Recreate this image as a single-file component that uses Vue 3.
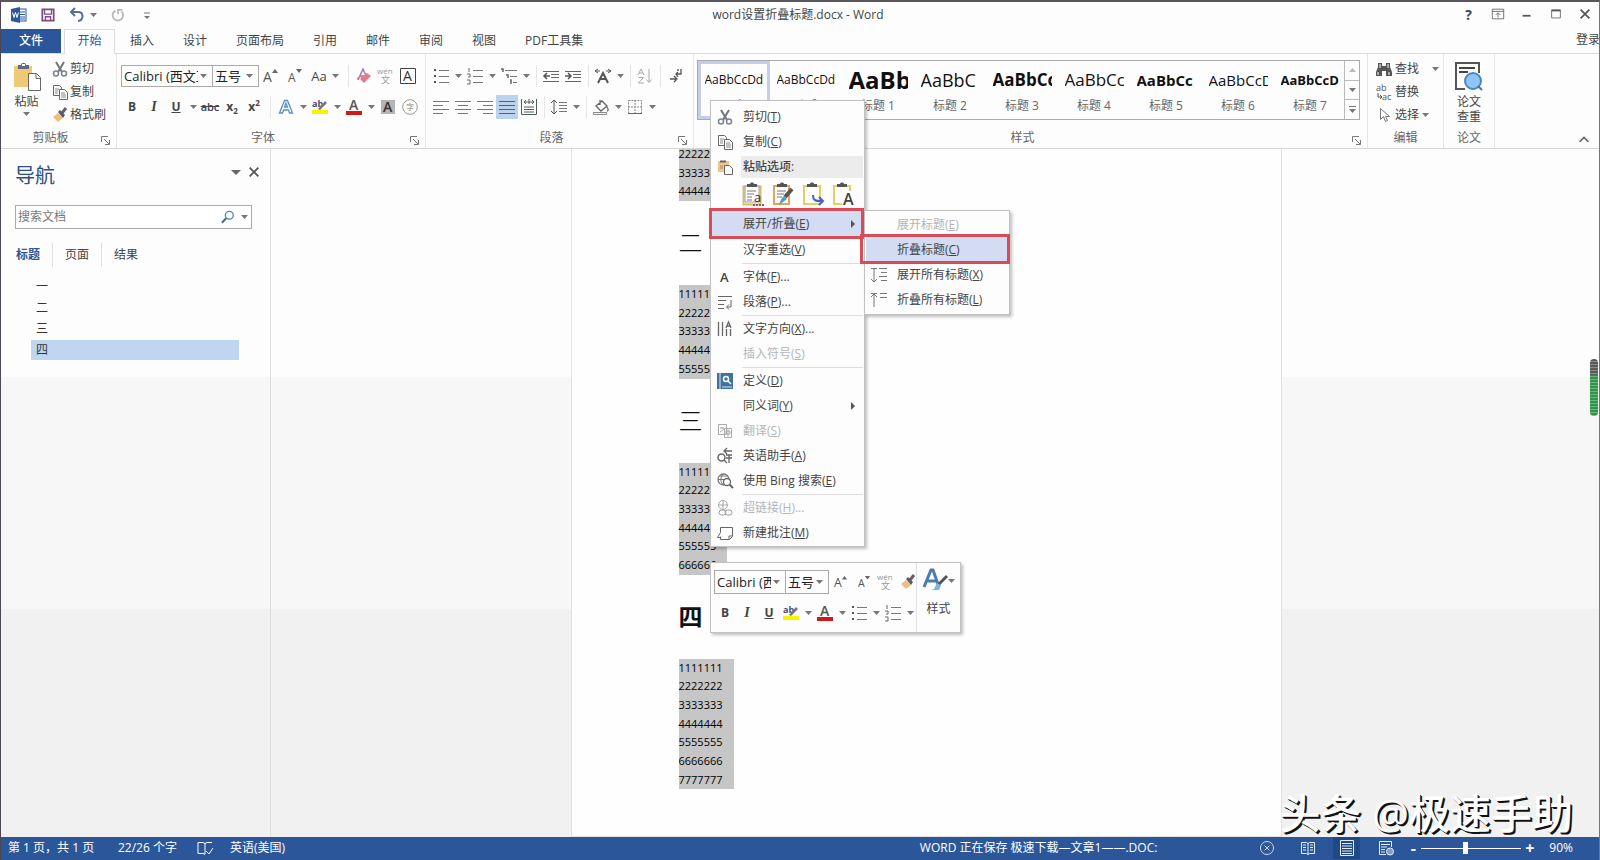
<script setup>
import { h, ref } from 'vue'

const art = {
  word: '<rect x="7" y="2" width="8" height="12" fill="#fff" stroke="#2b579a"/><path d="M9 5h5M9 7.500h5M9 10h5M9 12h5" stroke="#2b579a"/><path d="M0 2l9-2v16l-9-2z" fill="#2b579a"/><path d="M1.500 5.500l1.500 5 1.500-5 1.500 5 1.500-5" fill="none" stroke="#fff"/>',
  save: '<path d="M1.500 1.500h13v13h-13z" fill="#fff" stroke="#7c4a86" stroke-width="2"/><path d="M4 2v5h8V2M5 14v-4h6v4" fill="none" stroke="#7c4a86" stroke-width="1.500"/>',
  undo: '<path d="M6 1L2 5l4 4M2 5h7c6 0 6 8 0 9" fill="none" stroke="#5a6f94" stroke-width="2"/>',
  redo: '<path d="M5 3a6 6 0 1 0 7 1M8 1v6M8 2h5" fill="none" stroke="#b9b9b9" stroke-width="2"/>',
  custom: '<path d="M5 6h6" stroke="#777"/><path d="M5 9h6l-3 3z" fill="#777"/>',
  ribbon: '<path d="M1.500 2.500h13v11h-13zM1.500 5h13M8 12V7M5.500 9L8 6.500 10.500 9" fill="none" stroke="#666"/>',
  min: '<path d="M3 10h9" stroke="#555" stroke-width="2"/>',
  max: '<path d="M3 3.500h10v9H3z" fill="none" stroke="#666"/><path d="M3 4h10" stroke="#555" stroke-width="2"/>',
  close: '<path d="M3 3l10 10M13 3L3 13" stroke="#555" stroke-width="2"/>',
  paste: '<path d="M2 4h18v21H2z" fill="#efc878"/><path d="M6 3h3c0-3 5-3 5 0h3v4H6z" fill="#626a7c"/><rect x="10" y="2" width="3" height="2" fill="#fff"/><path d="M16.500 11.500h8l4 4v13h-12z" fill="#fff" stroke="#666"/><path d="M24 11.500v5h5" fill="none" stroke="#666"/>',
  cut: '<path d="M4 1l6 10M12 1L6 11" stroke="#6f767d" stroke-width="2"/><circle cx="4" cy="12.500" r="2.500" fill="none" stroke="#7a858f" stroke-width="1.500"/><circle cx="12" cy="12.500" r="2.500" fill="none" stroke="#7a858f" stroke-width="1.500"/>',
  copy: '<path d="M1.500 1.500h6l2 2v8h-8z" fill="#fff" stroke="#666"/><path d="M3 5h4M3 7h3M3 9h3" stroke="#888"/><path d="M7.500 5.500h5l3 3v7h-8z" fill="#fff" stroke="#666"/><path d="M9 9h4M9 11h5M9 13h5" stroke="#888"/>',
  brush: '<path d="M1 10l5-4 5 5-5 4z" fill="#efbd7d"/><path d="M6 5l2-2 5 5-2 3z" fill="#555b6b"/><path d="M10 6l4-5" stroke="#6c5a64" stroke-width="3"/>',
  eraser: '<path d="M2 12L7 1l4 9M4 8h5" fill="none" stroke="#9b7ba8" stroke-width="1.500"/><path d="M4 11l7-6 4 3-7 7z" fill="#e4788f"/><path d="M1 11l4-3 2 4" fill="none" stroke="#e4788f" stroke-width="1.500"/>',
  growA: '<text x="0" y="14" font-size="14" fill="#555">A</text><path d="M9 5h6l-3-4z" fill="#666"/>',
  shrinkA: '<text x="1" y="14" font-size="12" fill="#555">A</text><path d="M9 1h6l-3 4z" fill="#666"/>',
  wen: '<text x="-1" y="6" font-size="8" fill="#999">wén</text><text x="3" y="15" font-size="9" fill="#999">文</text>',
  boxA: '<path d="M.5.5h15v15H.5z" fill="#fff" stroke="#444"/><text x="3" y="13" font-size="14" fill="#333">A</text>',
  outA: '<path d="M1.500 14L6.500 1.500h3L14.500 14h-3l-1-3h-5l-1 3zM6.500 8h3L8 4z" fill="#fff" stroke="#5b8fc4" stroke-width="1.300"/>',
  mark: '<text x="0" y="8" font-size="9" font-weight="700" fill="#4a4a78">ab</text><path d="M6 10l7-8 2 2-7 7z" fill="#777"/><path d="M0 11h16v4H0z" fill="#f5f500"/>',
  redA: '<text x="3" y="11" font-size="14" fill="#555" font-weight="600">A</text><path d="M0 12h16v4H0z" fill="#cf1b16"/>',
  greyA: '<path d="M1 1h14v14H1z" fill="#b5b5b5"/><text x="3" y="13" font-size="14" fill="#333" font-weight="600">A</text>',
  ring: '<circle cx="8" cy="8" r="7.300" fill="#fff" stroke="#999"/><text x="4" y="11" font-size="8" fill="#888">字</text>',
  bullets: '<path d="M1 2h2M1 8h2M1 14h2" stroke="#555" stroke-width="2"/><path d="M6 2.500h10M6 8.500h10M6 14.500h10" stroke="#777"/>',
  numbers: '<path d="M2 0v4M0 6h3v3H1M0 12h3v4H0" fill="none" stroke="#666"/><path d="M6 2.500h10M6 8.500h10M6 14.500h10" stroke="#777"/>',
  multi: '<path d="M0 1h2v3M5 7h2v3M9 12h1v4" fill="none" stroke="#666" stroke-width="1.500"/><path d="M4 2.500h12M9 8.500h7M12 14.500h4" stroke="#777"/>',
  outdent: '<path d="M0 3.500h16M8 6.500h8M8 9.500h8M0 13.500h16" stroke="#666"/><path d="M7 8H1M4 5L1 8l3 3" fill="none" stroke="#555" stroke-width="1.500"/>',
  indent: '<path d="M0 3.500h16M8 6.500h8M8 9.500h8M0 13.500h16" stroke="#666"/><path d="M0 8h6M3 5l3 3-3 3" fill="none" stroke="#555" stroke-width="1.500"/>',
  scaleA: '<path d="M3 15L8 5l5 10M5 11h6" fill="none" stroke="#555" stroke-width="2"/><path d="M5 3H0M3 1L0 3l3 2M11 3h5M13 1l3 2-3 2" fill="none" stroke="#555"/>',
  sort: '<path d="M1 7l3-6 3 6M2 5h4M1.500 9.500h5l-5 5.500h5.500M12 1v13M9.500 11.500L12 14.500l2.500-3" fill="none" stroke="#aaa"/>',
  wrap: '<path d="M14 1v5H9M11 4L9 6l2 3M3 11h6M7 8l3 3-3 3M11 1v2" fill="none" stroke="#555" stroke-width="1.300"/>',
  left: '<path d="M0 2.500h16M0 6.500h10M0 10.500h16M0 14.500h10" stroke="#777"/>',
  center: '<path d="M0 2.500h16M3 6.500h10M0 10.500h16M3 14.500h10" stroke="#777"/>',
  right: '<path d="M0 2.500h16M6 6.500h10M0 10.500h16M6 14.500h10" stroke="#777"/>',
  justify: '<path d="M0 2.500h16M0 6.500h16M0 10.500h16M0 14.500h16" stroke="#4a6384"/>',
  distribute: '<path d="M.5 0v15.500h15V0M3 8h10M3 10.500h10M3 13h10M3 3h10M5 1L3 3l2 2M11 1l2 2-2 2M8 0v5" fill="none" stroke="#4f5f58"/>',
  spacing: '<path d="M3 1v14M0 4l3-3 3 3M0 12l3 3 3-3" fill="none" stroke="#555"/><path d="M8 3.500h8M8 6.500h8M8 9.500h8M8 12.500h8" stroke="#777"/>',
  bucket: '<path d="M3 7l6-5 5 5-6 5zM7 1v5M14 8c2 3 1 4 0 4" fill="none" stroke="#666" stroke-width="1.300"/><path d="M.5 13.500h13v2H.5z" fill="#fff" stroke="#888"/>',
  borders: '<path d="M1.500 1.500h13v13h-13zM8 1v14M1 8h14" fill="none" stroke="#888" stroke-dasharray="2 1"/><path d="M1 14.500h14" stroke="#666"/>',
  find: '<path d="M2 2h4v3h4V2h4v4l2 5v4h-6v-5H6v5H0v-4l2-5z" fill="#555"/><path d="M2 11v3M13 11v3M4 3v4M12 3v4" stroke="#fff"/>',
  replace: '<text x="0" y="7" font-size="9" fill="#555">ab</text><text x="6" y="16" font-size="9" fill="#555">ac</text><path d="M2 9v4h3M4 11l2 2-2 2" fill="none" stroke="#555"/>',
  pointer: '<path d="M4.500 1.500v11l3-3 2 5 2-1-2-4h4z" fill="#fff" stroke="#777"/>',
  paper: '<path d="M11 28H2V2h23v10" fill="none" stroke="#555" stroke-width="2"/><path d="M5 7h16M5 11h9" stroke="#444" stroke-width="2"/><circle cx="19" cy="20" r="8" fill="#8fc5f5" stroke="#4d86bd" stroke-width="2"/><path d="M24 25l4 4" stroke="#4d6f92" stroke-width="2"/>',
  up: '<path d="M3 10l5-5 5 5" fill="none" stroke="#666" stroke-width="2"/>',
  search: '<circle cx="9.500" cy="6" r="4.500" fill="#fff" stroke="#4d88a5" stroke-width="1.500"/><path d="M6 9.500L1 14.500" stroke="#4d7088" stroke-width="2.500"/>',
  launch: '<path d="M1.500 7V1.500H8M4 4l5 5M9.500 5v4.500H5" fill="none" stroke="#777"/>',
  pasteSm: '<path d="M1 2h11v11H1z" fill="#f0c58c"/><path d="M3 1.500h6v2H3z" fill="#666"/><path d="M7.500 6.500h5l3 3v6h-8z" fill="#fff" stroke="#666"/><path d="M3 7h3M3 9h3" stroke="#a87"/>',
  fontA: '<text x="3" y="13" font-size="13" font-weight="600" fill="#444">A</text>',
  para: '<path d="M1 2.500h14M1 6.500h8M1 10.500h6M1 14.500h6M14 6v7h-4M12 10.500L9.500 13l2.500 2.500" fill="none" stroke="#666"/>',
  direction: '<path d="M1.500 1v14M5.500 1v14M9.500 8v7M13.500 8v7M9 7l2.500-6L14 7M10 5h3.500" fill="none" stroke="#666" stroke-width="1.300"/>',
  define: '<path d="M0 0h16v16H0z" fill="#41719f"/><path d="M3 0v16M5 14h10" stroke="#dce8f2"/><circle cx="9" cy="6" r="2.500" fill="none" stroke="#fff" stroke-width="1.500"/><path d="M11 8l3 3" stroke="#fff" stroke-width="1.500"/>',
  translate: '<path d="M1.500 1.500h8v10h-8zM3 5h4M5 4v2M3 9l4-3M7.500 5.500h7v9h-7zM9 8h4v3H9zM11 6.500v7" fill="none" stroke="#aaa"/>',
  english: '<circle cx="4.500" cy="9.500" r="3.500" fill="none" stroke="#666" stroke-width="1.500"/><path d="M7 12l3 3M7 3h8M10 0L7 3l3 3M9 7h6M9 10h6M12 7v8" fill="none" stroke="#666" stroke-width="1.300"/>',
  bing: '<circle cx="6.500" cy="6.500" r="5.500" fill="none" stroke="#777" stroke-width="1.300"/><path d="M1 6.500h6M6.500 1c-4 3-3 9 0 11M3 3h8" fill="none" stroke="#777"/><circle cx="10" cy="9" r="3.500" fill="#fff" stroke="#666" stroke-width="1.300"/><path d="M12.500 11.500L16 15" stroke="#666" stroke-width="2"/>',
  link: '<circle cx="6" cy="5" r="4.500" fill="none" stroke="#aaa"/><path d="M1.500 5h9M6 .5v9" stroke="#aaa"/><rect x="2" y="10" width="7" height="5" rx="2.500" fill="#fff" stroke="#999"/><rect x="8" y="10" width="7" height="5" rx="2.500" fill="none" stroke="#999"/>',
  note: '<path d="M3.500 2.500h12v9l-3 3h-9v-3M15 11h-3v3M3.500 2.500v5l-3 5h3" fill="none" stroke="#666"/>',
  expandAll: '<path d="M3 1v14M0 12l3 3 3-3M0 1.500h6M8 1.500h8M10 5.500h6M8 9.500h8M10 13.500h6" fill="none" stroke="#777"/>',
  collapseAll: '<path d="M3 15V2M0 5l3-3 3 3M0 1.500h6M9 1.500h7M9 5.500h7" fill="none" stroke="#777"/>',
  clipText: '<path d="M1.500 3.500h17v18h-17z" fill="#fff" stroke="#e2b968" stroke-width="2"/><path d="M3 3h14v16H3z" fill="#fff" stroke="#999"/><path d="M5 1h3c0-2 4-2 4 0h3v3H5z" fill="#555"/><path d="M5 8h9M5 11h7M5 14h5M5 17h5" stroke="#777"/><text x="12" y="19" font-size="13" fill="#333">a</text><path d="M11 22h11" stroke="#a55" stroke-width="2" stroke-dasharray="2 1"/>',
  clipBrush: '<path d="M2 3h15v18H2z" fill="#fff" stroke="#e3a35c" stroke-width="2"/><path d="M5 1h3c0-2 4-2 4 0h3v3H5z" fill="#555"/><path d="M5 8h9M5 11h7M5 14h5" stroke="#777"/><path d="M20 6l-7 8" stroke="#555" stroke-width="4"/><path d="M12 13l3 3-8 6c1-3 2-7 5-9z" fill="#4f9bc1"/>',
  clipArrow: '<path d="M2 3h16v18H2z" fill="#fff" stroke="#edc968" stroke-width="2"/><path d="M5 1h3c0-2 4-2 4 0h3v3H5z" fill="#555"/><path d="M11 12c0 6 3 6 9 6M17 14l4 4-4 4" fill="none" stroke="#4468b8" stroke-width="2"/>',
  clipA: '<path d="M2 3h16v18H2z" fill="#fff" stroke="#edc968" stroke-width="2"/><path d="M5 1h3c0-2 4-2 4 0h3v3H5z" fill="#555"/><path d="M10 8h14v15H10z" fill="#fff"/><text x="11" y="22" font-size="16" font-weight="600" fill="#444">A</text>',
  bigA: '<path d="M2 19L9 2h2l6 17M5 13h9" fill="none" stroke="#4b7bb0" stroke-width="3"/><path d="M12 21l3-6 4 2-2 5H9z" fill="#77b6df"/><path d="M17 16l8-8" stroke="#555" stroke-width="3"/>',
  spell: '<path d="M8 3v11M1 2.500h5l2 1 2-1h5M1 2.500v11h5l2 1M9 11l3 3 4-6" fill="none" stroke="#fff"/>',
  sync: '<circle cx="8" cy="8" r="6.500" fill="none" stroke="#cddaf0"/><path d="M5.500 5.500l5 5M10.500 5.500l-5 5" stroke="#cddaf0"/>',
  read: '<path d="M8 3v12M1.500 2.500h5l1.500 1 1.500-1h5v11h-5l-1.500 1-1.500-1h-5zM3 5h3M3 7.500h3M3 10h3M10 5h3M10 7.500h3M10 10h3" fill="none" stroke="#e4ecf8"/>',
  print: '<path d="M1.500.5h13v15h-13zM3 3.500h10M3 6h10M3 8.500h10M3 11h10M3 13.500h10" fill="none" stroke="#e4ecf8"/>',
  web: '<path d="M8 14.500H1.500V1.500h12V7M3 4.500h9M3 7h6M3 9.500h4M3 12h4" fill="none" stroke="#e4ecf8"/><circle cx="12" cy="11.500" r="3.500" fill="#7d9ccb" stroke="#e4ecf8"/>'
}

const Icon = ({ name, size = 16, box = 16 }) =>
  h('svg', { width: size, height: size, viewBox: `0 0 ${box} ${box}`, 'aria-hidden': 'true', innerHTML: art[name] })
Icon.props = ['name', 'size', 'box']

const Caret = () =>
  h('svg', { width: 7, height: 4, viewBox: '0 0 7 4', 'aria-hidden': 'true' }, [h('path', { d: 'M0 0h7L3.500 4z', fill: '#777' })])

const tabs = ['插入', '设计', '页面布局', '引用', '邮件', '审阅', '视图', 'PDF工具集']
const windowTools = ['ribbon', 'min', 'max', 'close']

// kinds: i = icon, t = styled letter, d = drop-down caret, s = separator
const fontRow = [
  { k: 't', c: 'b', x: 'B' }, { k: 't', c: 'it', x: 'I' }, { k: 't', c: 'u', x: 'U' }, { k: 'd' },
  { k: 't', c: 'st', x: 'abc' }, { k: 't', c: 'b', x: 'x', sub: '2' }, { k: 't', c: 'b', x: 'x', sup: '2' }, { k: 's' },
  { k: 'i', x: 'outA' }, { k: 'd' }, { k: 'i', x: 'mark' }, { k: 'd' }, { k: 'i', x: 'redA' }, { k: 'd' },
  { k: 'i', x: 'greyA' }, { k: 'i', x: 'ring' }
]
const paraRows = [
  [{ k: 'i', x: 'bullets' }, { k: 'd' }, { k: 'i', x: 'numbers' }, { k: 'd' }, { k: 'i', x: 'multi' }, { k: 'd' }, { k: 's' },
    { k: 'i', x: 'outdent' }, { k: 'i', x: 'indent' }, { k: 's' }, { k: 'i', x: 'scaleA' }, { k: 'd' }, { k: 's' },
    { k: 'i', x: 'sort' }, { k: 's' }, { k: 'i', x: 'wrap' }],
  [{ k: 'i', x: 'left' }, { k: 'i', x: 'center' }, { k: 'i', x: 'right' }, { k: 'i', x: 'justify', on: true },
    { k: 'i', x: 'distribute' }, { k: 's' }, { k: 'i', x: 'spacing' }, { k: 'd' }, { k: 's' },
    { k: 'i', x: 'bucket' }, { k: 'd' }, { k: 'i', x: 'borders' }, { k: 'd' }]
]
const miniRow = [
  { k: 't', c: 'b', x: 'B' }, { k: 't', c: 'it', x: 'I' }, { k: 't', c: 'u', x: 'U' }, { k: 'i', x: 'mark' }, { k: 'd' },
  { k: 'i', x: 'redA' }, { k: 'd' }, { k: 'i', x: 'bullets' }, { k: 'd' }, { k: 'i', x: 'numbers' }, { k: 'd' }
]

const Tools = ({ items }) =>
  items.map((t) => {
    if (t.k === 's') return h('span', { class: 'sep' })
    if (t.k === 'd') return h('button', { class: 'drop', 'aria-label': '更多' }, [h(Caret)])
    if (t.k === 'i') return h('button', { class: ['tool', { on: t.on }], 'aria-label': t.x }, [h(Icon, { name: t.x })])
    return h('button', { class: ['tool', t.c] }, [t.x, t.sub && h('sub', t.sub), t.sup && h('sup', t.sup)])
  })
Tools.props = ['items']

const styles = [
  { n: '正文', p: 'AaBbCcDd', c: 's12', on: true },
  { n: '无间隔', p: 'AaBbCcDd', c: 's12' },
  { n: '标题 1', p: 'AaBb', c: 's24 bold' },
  { n: '标题 2', p: 'AaBbC', c: 's18' },
  { n: '标题 3', p: 'AaBbCc', c: 's17 bold' },
  { n: '标题 4', p: 'AaBbCc', c: 's17' },
  { n: '标题 5', p: 'AaBbCc', c: 's15 bold' },
  { n: '标题 6', p: 'AaBbCcD', c: 's15' },
  { n: '标题 7', p: 'AaBbCcD', c: 's13 bold' }
]

const outline = ['一', '二', '三', '四']
const rows = (from, to, len) => {
  const out = []
  for (let n = from; n <= to; n++) out.push(String(n).repeat(len))
  return out
}
const sections = [
  { lines: rows(2, 4, 5) },
  { title: '二', lines: rows(1, 5, 5) },
  { title: '三', lines: rows(1, 6, 6) },
  { title: '四', lines: rows(1, 7, 7), bold: true }
]

const pasteKinds = ['clipText', 'clipBrush', 'clipArrow', 'clipA']
const menu = [
  { i: 'cut', t: '剪切', k: 'T' },
  { i: 'copy', t: '复制', k: 'C' },
  { i: 'pasteSm', t: '粘贴选项:', title: true },
  { paste: true },
  { t: '展开/折叠', k: 'E', sub: true, on: true },
  { t: '汉字重选', k: 'V' },
  { line: true },
  { i: 'fontA', t: '字体', k: 'F', e: '...' },
  { i: 'para', t: '段落', k: 'P', e: '...' },
  { line: true },
  { i: 'direction', t: '文字方向', k: 'X', e: '...' },
  { t: '插入符号', k: 'S', off: true },
  { line: true },
  { i: 'define', t: '定义', k: 'D' },
  { t: '同义词', k: 'Y', sub: true },
  { i: 'translate', t: '翻译', k: 'S', off: true },
  { i: 'english', t: '英语助手', k: 'A' },
  { i: 'bing', t: '使用 Bing 搜索', k: 'E' },
  { line: true },
  { i: 'link', t: '超链接', k: 'H', e: '...', off: true },
  { i: 'note', t: '新建批注', k: 'M' }
]
const submenu = [
  { t: '展开标题', k: 'E', off: true },
  { t: '折叠标题', k: 'C', on: true },
  { i: 'expandAll', t: '展开所有标题', k: 'X' },
  { i: 'collapseAll', t: '折叠所有标题', k: 'L' }
]
const zoom = ref(44)
</script>

<template>
  <div class="app">
    <header class="titlebar">
      <div class="quick">
        <Icon name="word" />
        <button aria-label="保存"><Icon name="save" :size="14" /></button>
        <button class="undo" aria-label="撤消"><Icon name="undo" /><Caret /></button>
        <button aria-label="重复"><Icon name="redo" :size="14" /></button>
        <button aria-label="自定义"><Icon name="custom" /></button>
      </div>
      <h1>word设置折叠标题.docx - Word</h1>
      <div class="win">
        <button class="help">?</button>
        <button v-for="w in windowTools" :key="w" :aria-label="w"><Icon :name="w" :size="14" /></button>
      </div>
    </header>

    <nav class="tabs">
      <button class="file">文件</button>
      <button class="current">开始</button>
      <button v-for="t in tabs" :key="t">{{ t }}</button>
      <a class="login" href="#">登录</a>
    </nav>

    <section class="ribbon">
      <div class="group clip">
        <div class="body">
          <button class="big"><Icon name="paste" :size="30" :box="30" /><span>粘贴</span><Caret /></button>
          <div class="stack">
            <button><Icon name="cut" />剪切</button>
            <button><Icon name="copy" />复制</button>
            <button><Icon name="brush" />格式刷</button>
          </div>
        </div>
        <footer><span>剪贴板</span><button aria-label="剪贴板选项"><Icon name="launch" :size="10" :box="10" /></button></footer>
      </div>

      <div class="group font">
        <div class="body rows">
          <div class="row">
            <label class="combo wide"><select aria-label="字体"><option>Calibri (西文正文)</option></select><Caret /></label>
            <label class="combo narrow"><select aria-label="字号"><option>五号</option></select><Caret /></label>
            <button class="tool grow" aria-label="增大字号"><Icon name="growA" /></button>
            <button class="tool grow" aria-label="减小字号"><Icon name="shrinkA" /></button>
            <button class="case">Aa <Caret /></button>
            <span class="sep"></span>
            <button class="tool" aria-label="清除格式"><Icon name="eraser" /></button>
            <button class="tool" aria-label="拼音指南"><Icon name="wen" /></button>
            <button class="tool" aria-label="字符边框"><Icon name="boxA" /></button>
          </div>
          <div class="row"><Tools :items="fontRow" /></div>
        </div>
        <footer><span>字体</span><button aria-label="字体选项"><Icon name="launch" :size="10" :box="10" /></button></footer>
      </div>

      <div class="group para">
        <div class="body rows">
          <div v-for="(r, i) in paraRows" :key="i" class="row"><Tools :items="r" /></div>
        </div>
        <footer><span>段落</span><button aria-label="段落选项"><Icon name="launch" :size="10" :box="10" /></button></footer>
      </div>

      <div class="group styles">
        <div class="body">
          <div class="gallery">
            <div class="cards">
              <button v-for="s in styles" :key="s.n" class="card" :class="{ on: s.on }">
                <span class="preview" :class="s.c">{{ s.p }}</span>
                <span class="name">{{ s.n }}</span>
              </button>
            </div>
            <div class="scroll">
              <button aria-label="上"><Caret class="flip" /></button>
              <button aria-label="下"><Caret /></button>
              <button class="more" aria-label="其他"><Caret /></button>
            </div>
          </div>
        </div>
        <footer><span>样式</span><button aria-label="样式选项"><Icon name="launch" :size="10" :box="10" /></button></footer>
      </div>

      <div class="group edit">
        <div class="body">
          <div class="stack">
            <button><Icon name="find" />查找<Caret class="far" /></button>
            <button><Icon name="replace" />替换</button>
            <button><Icon name="pointer" />选择<Caret /></button>
          </div>
        </div>
        <footer><span>编辑</span></footer>
      </div>

      <div class="group check">
        <div class="body">
          <button class="big"><Icon name="paper" :size="30" :box="30" /><span>论文<br />查重</span></button>
        </div>
        <footer><span>论文</span></footer>
      </div>

      <div class="tail"><button aria-label="折叠功能区"><Icon name="up" :size="14" /></button></div>
    </section>

    <main class="work">
      <aside class="pane">
        <div class="head">
          <h2>导航</h2>
          <button aria-label="选项"><svg width="10" height="5" viewBox="0 0 10 5"><path d="M0 0h10L5 5z" fill="#666" /></svg></button>
          <button aria-label="关闭"><Icon name="close" :size="14" /></button>
        </div>
        <div class="search">
          <input type="text" placeholder="搜索文档" aria-label="搜索文档" />
          <button aria-label="搜索"><Icon name="search" :size="14" /></button>
          <Caret />
        </div>
        <div class="views">
          <button class="sel">标题</button><button>页面</button><button>结果</button>
        </div>
        <ul>
          <li v-for="(o, i) in outline" :key="o" :class="{ sel: i === 3 }">{{ o }}</li>
        </ul>
      </aside>

      <div class="canvas">
        <article class="sheet">
          <section v-for="(s, i) in sections" :key="i">
            <h3 v-if="s.title" :class="{ heavy: s.bold }">{{ s.title }}</h3>
            <div class="picked"><p v-for="l in s.lines" :key="l">{{ l }}</p></div>
          </section>
        </article>
      </div>
    </main>

    <footer class="status">
      <span class="pages">第 1 页，共 1 页</span>
      <span class="words">22/26 个字</span>
      <button aria-label="校对"><Icon name="spell" /></button>
      <span class="lang">英语(美国)</span>
      <span class="saving">WORD 正在保存 极速下载—文章1——.DOC:</span>
      <Icon name="sync" />
      <div class="modes">
        <button aria-label="阅读视图"><Icon name="read" /></button>
        <button class="on" aria-label="页面视图"><Icon name="print" /></button>
        <button aria-label="Web 版式"><Icon name="web" /></button>
      </div>
      <button class="step">-</button>
      <input v-model="zoom" type="range" min="0" max="100" aria-label="显示比例" />
      <button class="step">+</button>
      <span class="pct">90%</span>
    </footer>

    <div class="menu main">
      <template v-for="(m, i) in menu" :key="i">
        <hr v-if="m.line" />
        <div v-else-if="m.paste" class="pastes">
          <button v-for="p in pasteKinds" :key="p" :aria-label="p"><Icon :name="p" :size="24" :box="24" /></button>
        </div>
        <button v-else class="item" :class="{ caption: m.title, on: m.on }" :disabled="m.off">
          <span class="ico"><Icon v-if="m.i" :name="m.i" /></span>
          <span class="txt">{{ m.t }}<template v-if="m.k">(<u>{{ m.k }}</u>)</template>{{ m.e }}</span>
          <svg v-if="m.sub" width="4" height="8" viewBox="0 0 4 8"><path d="M0 0l4 4-4 4z" fill="#555" /></svg>
        </button>
      </template>
    </div>
    <div class="menu side">
      <button v-for="m in submenu" :key="m.t" class="item" :class="{ on: m.on }" :disabled="m.off">
        <span class="ico"><Icon v-if="m.i" :name="m.i" /></span>
        <span class="txt">{{ m.t }}(<u>{{ m.k }}</u>)</span>
      </button>
    </div>
    <div class="frame first"></div>
    <div class="frame second"></div>

    <div class="mini">
      <div class="rows">
        <div class="row">
          <label class="combo wide"><select aria-label="浮动字体"><option>Calibri (西文正文)</option></select><Caret /></label>
          <label class="combo narrow"><select aria-label="浮动字号"><option>五号</option></select><Caret /></label>
          <button class="tool grow" aria-label="增大字号"><Icon name="growA" :size="14" /></button>
          <button class="tool" aria-label="减小字号"><Icon name="shrinkA" :size="14" /></button>
          <button class="tool" aria-label="拼音指南"><Icon name="wen" /></button>
          <button class="tool" aria-label="格式刷"><Icon name="brush" /></button>
        </div>
        <div class="row"><Tools :items="miniRow" /></div>
      </div>
      <button class="look"><span><Icon name="bigA" :size="26" :box="26" /><Caret /></span>样式</button>
    </div>

    <div class="thumb"></div>
    <div class="mark">头条 @极速手助</div>
  </div>
</template>

<style>
html, body { margin: 0; background: #fdfdfd; }
.app .tool, .app .drop { display: flex; align-items: center; justify-content: center; height: 24px; flex: none; }
.app .tool { width: 22px; font-size: 13px; color: #555; }
.app .drop { width: 12px; }
.app .tool.on { background: #bcd3ee; }
.app .tool.b, .app .tool.u { font-weight: 700; }
.app .tool.it { font: italic 700 14px "Liberation Serif", serif; }
.app .tool.u { text-decoration: underline; }
.app .tool.st { font-size: 11px; font-weight: 600; text-decoration: line-through; }
.app .tool sub { font-size: 8px; align-self: flex-end; }
.app .tool sup { font-size: 8px; align-self: flex-start; }
.app .sep { flex: none; width: var(--sep, 8px); height: 22px; background: linear-gradient(#e6e6e6, #e6e6e6) center / 1px 100% no-repeat; }
</style>

<style scoped>
.app { position: relative; display: flex; flex-direction: column; height: 100vh; box-sizing: border-box; overflow: hidden; border-top: 2px solid #5a575c; border-left: 1px solid #4b4754; border-right: 1px solid #77747c; background: #fdfdfd; color: #444; font: 12px/16px "Open Sans", "Noto Sans CJK SC", sans-serif; }
.app :deep(button) { margin: 0; padding: 0; border: 0; background: none; font: inherit; color: inherit; white-space: nowrap; }
.app :deep(svg) { display: block; flex: none; overflow: visible; }
h1, h2, h3, p, ul { margin: 0; padding: 0; font-weight: 400; }

.titlebar { display: flex; align-items: center; height: 27px; flex: none; box-sizing: border-box; padding-bottom: 2px; }
.quick { display: flex; align-items: center; gap: 14px; width: 236px; padding-left: 10px; box-sizing: border-box; }
.quick .undo { display: flex; align-items: center; gap: 5px; }
h1 { flex: 1; font-size: 12px; line-height: 16px; text-align: center; }
.win { display: flex; width: 240px; justify-content: flex-end; }
.win button { display: flex; justify-content: center; width: 29px; }
.app .win .help { font-weight: 700; font-size: 14px; }

.tabs { display: flex; gap: 1px; height: 24px; flex: none; border-bottom: 1px solid #dcdcdc; }
.app .tabs button { padding: 0 14px; }
.app .tabs .file { width: 60px; background: #2b579a; color: #fff; font-weight: 500; }
.app .tabs .current { width: 51px; margin-left: 2px; margin-bottom: -1px; padding: 0 0 2px; border: 1px solid #dcdcdc; border-bottom: 0; background: #fdfdfd; color: #2b579a; }
.login { align-self: center; margin-left: auto; margin-right: -1px; padding-bottom: 3px; color: #444; text-decoration: none; }

.ribbon { display: flex; height: 94px; flex: none; border-bottom: 1px solid #d6d6d6; }
.group { display: flex; flex-direction: column; flex: none; box-sizing: border-box; border-right: 1px solid #e6e6e6; }
.group .body { display: flex; flex: 1; }
.group footer { display: flex; height: 20px; align-items: center; padding-top: 1px; }
.group footer span { flex: 1; text-align: center; color: #666; }
.group footer button { width: 16px; }
.group footer svg { margin-top: 4px; }
.clip { width: 116px; }
.font { width: 309px; --sep: 10px; }
.para { width: 268px; }
.styles { flex: 1; min-width: 0; }
.edit { width: 76px; }
.check { width: 51px; }
.tail { display: flex; width: 104px; align-items: flex-end; justify-content: flex-end; box-sizing: border-box; }
.app .tail { padding: 0 8px 1px 0; }
.big { display: flex; flex-direction: column; align-items: center; }
.app .clip .big { width: 51px; padding-top: 8px; gap: 2px; }
.stack { display: flex; flex-direction: column; padding-top: 3px; }
.stack button { display: flex; align-items: center; gap: 2px; height: 23px; }
.stack .far { margin-left: 10px; }
.edit .stack { padding-left: 8px; }
.edit button { gap: 3px; }
.check .body { justify-content: center; }
.app .check .big { padding-top: 7px; line-height: 15px; gap: 3px; }

.rows { display: flex; flex-direction: column; }
.row { display: flex; align-items: center; }
.group .rows { padding: 10px 0 0 4px; gap: 7px; flex: 1; justify-content: flex-start; }
.group .row { height: 24px; }
.combo { display: flex; align-items: center; box-sizing: border-box; height: 22px; border: 1px solid #aaa; padding-right: 5px; flex: none; }
.combo.wide { width: 92px; }
.combo.narrow { width: 47px; margin-left: -1px; }
.combo select { flex: 1; min-width: 0; width: 0; appearance: none; border: 0; padding: 0 0 0 2px; margin-right: 2px; background: none; font: 13px/18px "Open Sans", "Noto Sans CJK SC", sans-serif; color: #222; outline: none; }
.row .grow { width: 24px; }
.app .case { display: flex; align-items: center; justify-content: center; gap: 5px; width: 36px; font-size: 13px; }

.styles .body { padding: 6px 7px 0 3px; }
.gallery { display: flex; flex: 1; min-width: 0; height: 60px; box-sizing: border-box; border: 1px solid #aaa; }
.cards { display: flex; flex: 1; min-width: 0; overflow: hidden; }
.card { display: flex; flex-direction: column; align-items: center; flex: none; width: 72px; box-sizing: border-box; }
.app .card.on { box-shadow: inset 0 0 0 3px #c6cdea; }
.preview { display: flex; align-items: center; width: 59px; height: 37px; overflow: hidden; color: #111; }
.name { color: #666; }
.bold { font-weight: 700; }
.s12 { font-size: 12px; }
.s13 { font-size: 13px; }
.s15 { font-size: 15px; }
.s17 { font-size: 17px; }
.s18 { font-size: 18px; }
.s24 { font-size: 24px; }
.scroll { display: flex; flex-direction: column; width: 14px; border-left: 1px solid #bbb; }
.scroll button { display: flex; flex: 1; align-items: center; justify-content: center; }
.app .scroll button + button { border-top: 1px solid #bbb; }
.flip { transform: rotate(180deg); opacity: .5; }
.more svg { border-top: 1px solid #777; padding-top: 2px; }

.work { display: flex; flex: 1; min-height: 0; background: linear-gradient(#fdfdfd 228px, #f7f7f7 228px 460px, #f1f1f1 460px); }
.pane { width: 270px; flex: none; border-right: 1px solid #dedede; padding: 0 16px 0 14px; box-sizing: border-box; }
.head { display: flex; align-items: center; height: 54px; gap: 6px; margin-right: -7px; }
h2 { flex: 1; font-size: 20px; line-height: 28px; color: #2f4f86; }
.app .head button { margin-top: -8px; }
.search { display: flex; align-items: center; height: 24px; margin: 2px 2px 0 0; padding-right: 3px; box-sizing: border-box; border: 1px solid #aaa; background: #fff; gap: 6px; }
.search input { flex: 1; min-width: 0; border: 0; padding: 0 2px; background: none; font: inherit; outline: none; }
.search input::placeholder { color: #777; opacity: 1; }
.views { display: flex; height: 24px; margin: 14px 0 10px; }
.app .views button { padding: 0 12px; }
.app .views button + button { border-left: 1px solid #e2e2e2; }
.app .views button:first-child { padding-left: 1px; }
.app .views .sel { color: #2b579a; font-weight: 700; }
ul { list-style: none; padding: 0 15px 0 16px; }
li { height: 21px; line-height: 20px; padding-left: 5px; color: #333; }
li.sel { background: #bfd6f0; height: 20px; }
.canvas { display: flex; flex: 1; justify-content: center; padding-right: 18px; overflow: hidden; }
.sheet { width: 711px; box-sizing: border-box; padding-left: 107px; background: #fefefe; border: 1px solid #e2e2e2; border-top: 0; }
.sheet section:first-child { margin-top: -4px; }
.picked { width: fit-content; padding-right: 11px; background: #c6c6c6; }
.picked p { font-size: 11px; line-height: 1.7; font-weight: 500; color: #000; }
h3 { font-size: 24px; line-height: 84px; color: #111; font-weight: 300; }
h3.heavy { font-weight: 700; }

.status { display: flex; align-items: center; height: 23px; flex: none; background: #2b579a; color: #fff; padding: 0 26px 1px 7px; box-sizing: border-box; }
.pages { width: 110px; }
.words { width: 79px; }
.lang { margin-left: 17px; }
.saving { margin-left: auto; margin-right: 102px; }
.modes { display: flex; margin-left: 19px; margin-right: 10px; }
.modes button { display: flex; align-items: center; justify-content: center; width: 27px; height: 22px; }
.app .modes button + button { margin-left: 12px; }
.app .modes .on { background: #1f4884; }
.app .step { width: 8px; font-size: 16px; font-weight: 700; }
.status input { appearance: none; width: 100px; height: 12px; margin: 0 4px; background: linear-gradient(#fff, #fff) center / 100% 1px no-repeat; }
.status input::-webkit-slider-thumb { appearance: none; width: 5px; height: 12px; background: #fff; }
.pct { margin-left: 16px; }

.menu { position: absolute; box-sizing: border-box; background: #fdfdfd; border: 1px solid #c2c2c2; box-shadow: 2px 2px 3px rgba(0, 0, 0, .25); }
.main { left: 709px; top: 98px; width: 155px; padding: 3px 1px 1px; }
.side { left: 863px; top: 208px; width: 146px; padding: 1px 1px 2px; }
.item { display: flex; align-items: center; width: 100%; height: 25px; text-align: left; }
.main .item.on { height: 26px; }
.ico { display: flex; justify-content: center; align-items: center; width: 25px; }
.txt { flex: 1; padding-left: 6px; }
.item > svg { margin-right: 8px; }
.app .item:disabled { color: #b5b5b5; }
.app .item.on { background: #d3dcf2; }
.caption .txt { background: #ececec; line-height: 22px; font-weight: 500; margin-left: 4px; padding-left: 2px; }
.menu hr { height: 1px; margin: 1px 0 0 30px; border: 0; background: #dedede; }
.pastes { display: flex; gap: 6px; height: 32px; align-items: center; padding-left: 30px; }
.frame { position: absolute; box-sizing: border-box; border: 3px solid #d84c55; }
.first { left: 708px; top: 206px; width: 155px; height: 31px; }
.second { left: 859px; top: 232px; width: 150px; height: 30px; }

.mini { position: absolute; left: 709px; top: 560px; display: flex; width: 251px; height: 71px; box-sizing: border-box; background: #fdfdfd; border: 1px solid #c2c2c2; box-shadow: 2px 2px 3px rgba(0, 0, 0, .25); }
.mini .rows { width: 206px; border-right: 1px solid #e2e2e2; padding: 6px 0 0 3px; box-sizing: border-box; gap: 6px; }
.mini .row { height: 25px; }
.mini .combo { height: 24px; }
.mini .combo.wide { width: 72px; }
.mini .combo.narrow { width: 44px; }
.look { display: flex; flex-direction: column; align-items: center; flex: 1; }
.app .look { padding-top: 5px; gap: 8px; line-height: 14px; }
.look span { display: flex; align-items: center; }

.thumb { position: absolute; right: 1px; top: 357px; width: 8px; height: 57px; border-radius: 4px; background: repeating-linear-gradient(transparent 0 2px, rgba(255, 255, 255, .3) 2px 3px), linear-gradient(#5a5a5a 14px, #2f9648 18px); }
.mark { position: absolute; right: 26px; bottom: 23px; font-size: 41px; line-height: 48px; color: #fff; text-shadow: 2px 2px 0 #111, 1px 1px 0 #111; font-weight: 500; white-space: nowrap; }
</style>
